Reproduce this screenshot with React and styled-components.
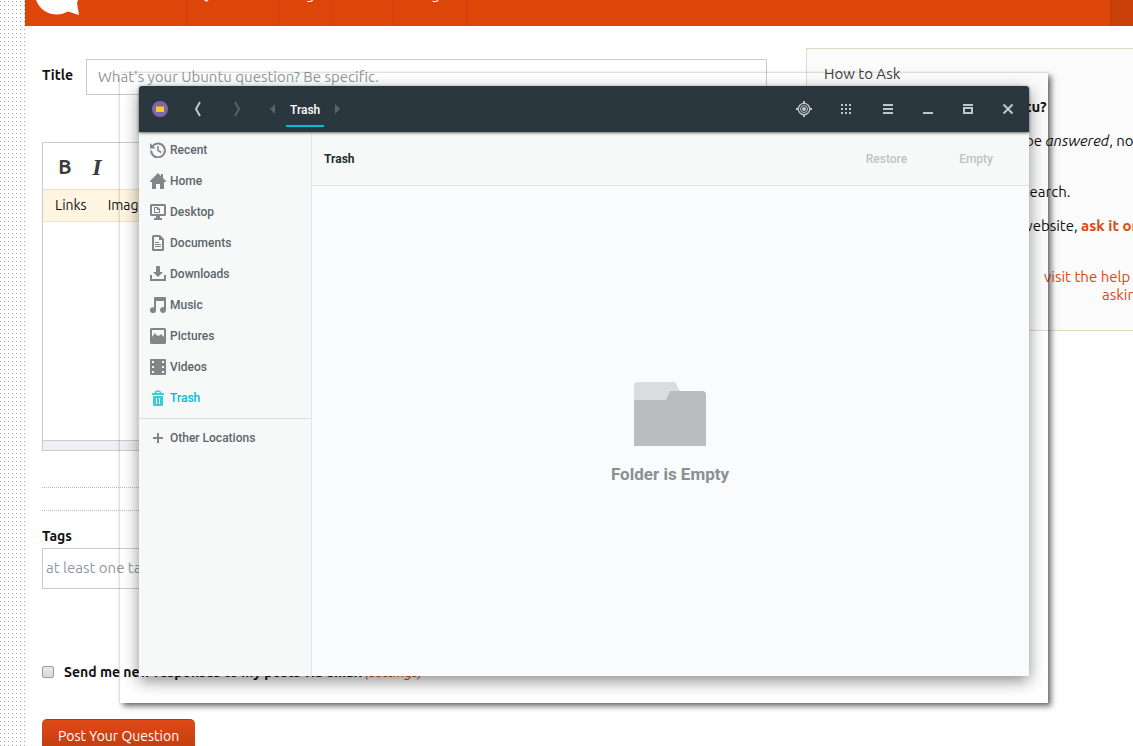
import React from "react";
import styled, { createGlobalStyle, css } from "styled-components";

const color = {
  orange: "#dd4509",
  orangeDark: "#c83f08",
  link: "#dd4814",
  bar: "#2b373e",
  accent: "#00bcd4",
  sidebarText: "#5c656a",
  icon: "#808689",
  border: "#c8ccd0",
  muted: "#9199a1",
};

const GlobalStyle = createGlobalStyle`
  * {
    box-sizing: border-box;
  }

  body {
    margin: 0;
    background: #ffffff;
    color: #111111;
    font-family: Ubuntu, "Noto Sans", "Open Sans", sans-serif;
    font-size: 14px;
    line-height: 18px;
    overflow: hidden;
  }

  button,
  input,
  textarea {
    font: inherit;
    margin: 0;
  }

  a {
    color: ${color.link};
    text-decoration: none;
  }
`;

/* Page behind the window */

const Page = styled.div`
  position: relative;
  height: 100vh;
  overflow: hidden;
  padding-left: 25px;
  background: linear-gradient(#ffffff 3px, transparent 3px) 0 2px / 4px 4px,
    linear-gradient(90deg, #a8a49f 1px, #ffffff 1px) 0 0 / 4px 4px;
`;

const Site = styled.div`
  display: flex;
  flex-direction: column;
  height: 100%;
  background: #ffffff;
`;

const TopBar = styled.header`
  display: flex;
  flex: none;
  height: 26px;
  overflow: hidden;
  background: ${color.orange};
`;

const Logo = styled.svg`
  display: block;
  flex: none;
  width: 161px;
  height: 26px;
`;

const Nav = styled.nav`
  display: flex;
  flex: 1;
`;

const NavItem = styled.a`
  flex: none;
  width: ${(props) => props.$width}px;
  height: 26px;
  border-left: 1px solid ${color.orangeDark};
  color: #ffffff;
  font-size: 15px;
  text-align: center;

  span {
    display: block;
    margin-top: -15px;
  }
`;

const TopEnd = styled.div`
  width: 23px;
  border-left: 1px solid #b93a07;
  background: ${color.orangeDark};
`;

const Columns = styled.main`
  display: flex;
  flex: 1;
  padding-left: 17px;
`;

const Form = styled.form`
  width: 725px;
  flex: none;
  padding-top: 33px;
`;

const TitleRow = styled.div`
  display: flex;
  align-items: flex-start;

  label {
    width: 44px;
    padding-top: 7px;
    font-weight: bold;
  }
`;

const TextField = styled.input`
  flex: 1;
  width: 100%;
  min-width: 0;
  height: ${(props) => props.$height}px;
  padding: 0 ${(props) => props.$pad}px 2px;
  border: 1px solid ${color.border};
  background: #ffffff;
  font-size: 15px;

  &::placeholder {
    color: ${color.muted};
    opacity: 1;
  }
`;

const Editor = styled.div`
  margin-top: 47px;
  border: 1px solid ${color.border};
`;

const Toolbar = styled.div`
  display: flex;
  gap: 4px;
  height: 46px;
  align-items: center;
  padding-left: 8px;
`;

const FormatButton = styled.button`
  width: 28px;
  padding: 2px 0 0;
  border: 0;
  background: none;
  color: #3b3b3b;
  font-size: 20px;
  line-height: 24px;
  font-weight: bold;
  ${(props) =>
    props.$italic &&
    css`
      font-family: "Liberation Serif", serif;
      font-style: italic;
      font-size: 24px;
    `}
`;

const HelpBar = styled.div`
  display: flex;
  gap: 21px;
  height: 33px;
  align-items: center;
  padding: 0 0 2px 12px;
  border: solid #f0e2c4;
  border-width: 1px 0;
  background: #fff5e1;

  a {
    color: #111111;
  }
`;

const Body = styled.textarea`
  display: block;
  width: 100%;
  height: 218px;
  border: 0;
  resize: none;
  background: #ffffff;
`;

const Grip = styled.div`
  height: 10px;
  border-top: 1px solid ${color.border};
  background: #eff0f1;
`;

const Preview = styled.div`
  height: 24px;
  margin: 36px 0 16px;
  border: dotted #b8b8b8;
  border-width: 1px 0;
`;

const Tags = styled.div`
  label {
    display: block;
    margin-bottom: 3px;
    font-weight: bold;
  }
`;

const SendRow = styled.div`
  display: flex;
  align-items: center;
  gap: 10px;
  margin-top: 74px;
  font-weight: bold;

  a {
    font-weight: normal;
    font-style: italic;
  }
`;

const Tick = styled.input`
  appearance: none;
  width: 12px;
  height: 12px;
  border: 1px solid #9c9c9c;
  border-radius: 2px;
  background: linear-gradient(#e9e9e9, #d8d8d8);
`;

const PostButton = styled.button`
  height: 34px;
  margin-top: 38px;
  padding: 0 16px 2px;
  border: 0;
  border-top: 1px solid #b93a07;
  border-radius: 5px;
  background: linear-gradient(#e04915, #bd3c0f);
  color: #ffffff;
`;

const HowTo = styled.aside`
  flex: none;
  width: 365px;
  height: 283px;
  margin: 22px 0 0 39px;
  padding: 16px 17px;
  border: 1px solid #e0dcbf;
  background: #fbfbfb;
  font-size: 15px;

  h2 {
    margin: 0 0 15px;
    color: #3b4045;
    font-size: 15px;
    line-height: 18px;
    font-weight: normal;
  }

  h2,
  p {
    white-space: nowrap;
  }
`;

const HowToLine = styled.p`
  margin: 0 0 ${(props) => props.$after ?? 16}px;
  padding-left: ${(props) => props.$indent}px;
`;

/* File manager window */

const Outline = styled.div`
  position: absolute;
  inset: 73px 85px 43px 120px;
  box-shadow: 3px 3px 6px rgba(0, 0, 0, 0.6), 0 0 2px rgba(0, 0, 0, 0.15);
`;

const Window = styled.section`
  position: absolute;
  inset: 86px 104px 70px 139px;
  display: flex;
  flex-direction: column;
  border-radius: 3px 3px 0 0;
  background: #fafbfd;
  box-shadow: 0 5px 16px rgba(0, 0, 0, 0.45);
  font-family: Roboto, sans-serif;
  font-size: 12px;
  line-height: 16px;
  font-weight: 500;
`;

const HeaderBar = styled.header`
  position: relative;
  z-index: 1;
  display: flex;
  flex: none;
  align-items: center;
  height: 46px;
  padding: 0 2px 0 13px;
  border-radius: 3px 3px 0 0;
  background: ${color.bar};
  box-shadow: 0 1px 3px rgba(0, 0, 0, 0.6);
  color: #c1c6c9;
`;

const BarButton = styled.button`
  display: flex;
  justify-content: center;
  align-items: center;
  width: ${(props) => props.$width}px;
  height: 24px;
  padding: 0;
  border: 0;
  background: none;
  color: ${(props) => (props.$dim ? "#59646a" : "inherit")};

  svg {
    display: block;
    flex: none;
  }
`;

const Crumbs = styled.div`
  display: flex;
  align-items: center;
  margin-left: 14px;
`;

const Crumb = styled.button`
  height: 46px;
  padding: 1px 4px 0;
  border: 0;
  background: linear-gradient(${color.accent}, ${color.accent}) 0 39px / 100% 2px
    no-repeat;
  color: #ffffff;
`;

const Spacer = styled.div`
  flex: 1;
`;

const WindowBody = styled.div`
  display: flex;
  flex: 1;
  min-height: 0;
`;

const Sidebar = styled.nav`
  flex: none;
  width: 173px;
  padding-top: 3px;
  border-right: 1px solid #e4e7e8;
  background: #f7f9f8;
`;

const Place = styled.a`
  display: flex;
  align-items: flex-start;
  gap: 4px;
  height: 31px;
  padding: 7px 0 0 11px;
  color: ${(props) => (props.$active ? color.accent : color.sidebarText)};

  svg {
    display: block;
    flex: none;
    color: ${(props) => (props.$active ? "#3ccbdc" : color.icon)};
  }
`;

const Divider = styled.hr`
  margin: 4px 0;
  border: 0;
  border-top: 1px solid #dadedf;
`;

const Content = styled.div`
  display: flex;
  flex: 1;
  flex-direction: column;
`;

const ActionBar = styled.div`
  display: flex;
  align-items: center;
  height: 54px;
  padding: 0 36px 0 12px;
  border-bottom: 1px solid #e3e6e7;
  background: #f7f9f8;

  h1 {
    flex: 1;
    margin: 0;
    color: #222d32;
    font-size: 12px;
    line-height: 16px;
    font-weight: bold;
  }
`;

const Action = styled.button`
  padding: 0;
  margin-left: 52px;
  border: 0;
  background: none;
  color: #bfc3c5;
`;

const Empty = styled.div`
  display: flex;
  flex: 1;
  flex-direction: column;
  align-items: center;
  justify-content: center;
  gap: 18px;
  padding: 4px 1px 0 0;
  color: #8a8f92;
  font-size: 17px;
  line-height: 20px;
  font-weight: bold;

  svg {
    display: block;
  }

  p {
    margin: 0;
  }
`;

const icons = {
  recent: (
    <>
      <path
        d="M2.600 4.200A6.900 6.900 0 1 1 1.100 8.600"
        fill="none"
        stroke="currentColor"
        strokeWidth="2"
      />
      <path d="M0 1v5.600h5.600z" />
      <path
        d="M8 4v4.300l3.200 2.200"
        fill="none"
        stroke="currentColor"
        strokeWidth="1.600"
      />
    </>
  ),
  home: <path d="M8 0 0 8v1h2v7h4v-5h4v5h4V9h2V8l-3-3V1h-2v2z" />,
  desktop: (
    <>
      <path
        fillRule="evenodd"
        d="M1.500 0h13A1.500 1.500 0 0 1 16 1.500v9a1.500 1.500 0 0 1-1.500 1.500H10v2h2v2H4v-2h2v-2H1.500A1.500 1.500 0 0 1 0 10.500v-9A1.500 1.500 0 0 1 1.500 0zM2 2v8h12V2z"
      />
      <path fillRule="evenodd" d="M4 3h4l2 2v4H4zm1 1v4h4V6H7V4z" />
    </>
  ),
  documents: (
    <path
      fillRule="evenodd"
      d="M3.500 0H10l4 4v10.500a1.500 1.500 0 0 1-1.500 1.500h-9A1.500 1.500 0 0 1 2 14.500v-13A1.500 1.500 0 0 1 3.500 0zM4 2v12h8V5H9V2zM5 7h4v1H5zm0 2h6v1H5zm0 2h6v1H5z"
    />
  ),
  downloads: (
    <path d="M7 0h2a1 1 0 0 1 1 1v5h3l-5 5-5-5h3V1a1 1 0 0 1 1-1zM0 9h2v4h12V9h2v6H0z" />
  ),
  music: (
    <path d="M5 0h10a1 1 0 0 1 1 1v12a3 3 0 1 1-2-2.800V4H6v9.200a3 3 0 1 1-2-2.800V1a1 1 0 0 1 1-1z" />
  ),
  pictures: (
    <path
      fillRule="evenodd"
      d="M1.500 0h13A1.500 1.500 0 0 1 16 1.500v13a1.500 1.500 0 0 1-1.500 1.500h-13A1.500 1.500 0 0 1 0 14.500v-13A1.500 1.500 0 0 1 1.500 0zM2 2v7l3-4 2 3 1-1 1 1 2-2 3 3V2z"
    />
  ),
  videos: (
    <path
      fillRule="evenodd"
      d="M1 0h14a1 1 0 0 1 1 1v14a1 1 0 0 1-1 1H1a1 1 0 0 1-1-1V1a1 1 0 0 1 1-1zM2 2v2h2V2zm0 5v2h2V7zm0 5v2h2v-2zM12 2v2h2V2zm0 5v2h2V7zm0 5v2h2v-2z"
    />
  ),
  trash: (
    <>
      <path
        d="M5.500 3a2.500 2 0 0 1 5 0"
        fill="none"
        stroke="currentColor"
        strokeWidth="1.600"
      />
      <path d="M3 3h10a1 1 0 0 1 1 1v1H2V4a1 1 0 0 1 1-1z" />
      <path
        fillRule="evenodd"
        d="M3 6h10v9a1 1 0 0 1-1 1H4a1 1 0 0 1-1-1zM6 8v6h1V8zm3 0v6h1V8z"
      />
    </>
  ),
  other: <path d="M7 3h2v4h4v2H9v4H7V9H3V7h4z" />,
  back: (
    <path d="M10 1 6 8l4 7" fill="none" stroke="currentColor" strokeWidth="2" />
  ),
  forward: (
    <path d="m6 1 4 7-4 7" fill="none" stroke="currentColor" strokeWidth="2" />
  ),
  left: <path d="M10 3v10L5 8z" />,
  right: <path d="M6 3v10l5-5z" />,
  locate: (
    <>
      <path d="M7 0h2v3H7zm0 13h2v3H7zM0 7h3v2H0zm13 0h3v2h-3z" />
      <circle
        cx="8"
        cy="8"
        r="5.700"
        fill="none"
        stroke="currentColor"
        strokeWidth="1.300"
      />
      <circle
        cx="8"
        cy="8"
        r="3.500"
        fill="none"
        stroke="currentColor"
        strokeWidth="1"
      />
      <circle cx="8" cy="8" r="2" />
    </>
  ),
  grid: (
    <path d="M3 3h2v2H3zm4 0h2v2H7zm4 0h2v2h-2zM3 7h2v2H3zm4 0h2v2H7zm4 0h2v2h-2zM3 11h2v2H3zm4 0h2v2H7zm4 0h2v2h-2z" />
  ),
  menu: <path d="M3 3h10v2H3zm0 4h10v2H3zm0 4h10v2H3z" />,
  minimize: <path d="M3 11h10v2H3z" />,
  maximize: (
    <path fillRule="evenodd" d="M3 3h10v2H3zm0 3h10v7H3zm2 2v3h6V8z" />
  ),
  close: (
    <path
      d="m3.500 3.500 9 9m0-9-9 9"
      fill="none"
      stroke="currentColor"
      strokeWidth="2"
    />
  ),
};

const Icon = ({ name }) => (
  <svg
    width="16"
    height="16"
    viewBox="0 0 16 16"
    fill="currentColor"
    aria-hidden="true"
  >
    {icons[name]}
  </svg>
);

const navItems = [
  { label: "Questions", width: 92 },
  { label: "Tags", width: 54 },
  { label: "Users", width: 61 },
  { label: "Badges", width: 73 },
  { label: "", width: 1 },
];

const places = [
  { icon: "recent", label: "Recent" },
  { icon: "home", label: "Home" },
  { icon: "desktop", label: "Desktop" },
  { icon: "documents", label: "Documents" },
  { icon: "downloads", label: "Downloads" },
  { icon: "music", label: "Music" },
  { icon: "pictures", label: "Pictures" },
  { icon: "videos", label: "Videos" },
  { icon: "trash", label: "Trash" },
];

const tools = [
  { icon: "locate", label: "Locate", width: 42 },
  { icon: "grid", label: "View", width: 42 },
  { icon: "menu", label: "Menu", width: 42 },
  { icon: "minimize", label: "Minimize", width: 38 },
  { icon: "maximize", label: "Maximize", width: 42 },
  { icon: "close", label: "Close", width: 38 },
];

const AskPage = () => (
  <Site>
    <TopBar>
      <Logo viewBox="0 0 161 26" aria-hidden="true">
        <path
          d="M11 0C15 10 23 14.500 32 14.500q6 0 11-3l11 3.500-2-12 1-3z"
          fill="#ffffff"
        />
      </Logo>
      <Nav>
        {navItems.map((item) => (
          <NavItem key={item.width} href="#" $width={item.width}>
            <span>{item.label}</span>
          </NavItem>
        ))}
      </Nav>
      <TopEnd />
    </TopBar>
    <Columns>
      <Form>
        <TitleRow>
          <label htmlFor="title">Title</label>
          <TextField
            id="title"
            placeholder="What's your Ubuntu question? Be specific."
            $height={36}
            $pad={11}
          />
        </TitleRow>
        <Editor>
          <Toolbar>
            <FormatButton type="button">B</FormatButton>
            <FormatButton type="button" $italic>
              I
            </FormatButton>
          </Toolbar>
          <HelpBar>
            <a href="#">Links</a>
            <a href="#">Images</a>
          </HelpBar>
          <Body aria-label="Question body" />
          <Grip />
        </Editor>
        <Preview />
        <Tags>
          <label htmlFor="tags">Tags</label>
          <TextField
            id="tags"
            placeholder="at least one tag"
            $height={41}
            $pad={3}
          />
        </Tags>
        <SendRow>
          <Tick type="checkbox" id="notify" />
          <label htmlFor="notify">
            Send me new responses to my posts via email{" "}
            <a href="#">(settings)</a>
          </label>
        </SendRow>
        <PostButton type="button">Post Your Question</PostButton>
      </Form>
      <HowTo>
        <h2>How to Ask</h2>
        <HowToLine $indent={164}>
          <b>Ubuntu?</b>
        </HowToLine>
        <HowToLine $indent={201} $after={33}>
          be <i>answered</i>, not
        </HowToLine>
        <HowToLine $indent={199}>search.</HowToLine>
        <HowToLine $indent={197} $after={33}>
          website,{" "}
          <a href="#">
            <b>ask it on</b>
          </a>
        </HowToLine>
        <HowToLine $indent={220} $after={0}>
          <a href="#">visit the help</a>
        </HowToLine>
        <HowToLine $indent={278}>
          <a href="#">asking</a>
        </HowToLine>
      </HowTo>
    </Columns>
  </Site>
);

const FileManager = () => (
  <Window>
    <HeaderBar>
      <svg width="16" height="16" viewBox="0 0 16 16" aria-hidden="true">
        <circle cx="8" cy="8" r="8" fill="#7a68a8" />
        <path d="M4 5h8v1H4z" fill="#ee8f1c" />
        <path d="M4 6h8v5H4z" fill="#ffca28" />
      </svg>
      <BarButton type="button" aria-label="Back" $width={60}>
        <Icon name="back" />
      </BarButton>
      <BarButton type="button" aria-label="Forward" $width={18} $dim>
        <Icon name="forward" />
      </BarButton>
      <Crumbs>
        <BarButton type="button" aria-label="Previous" $width={26} $dim>
          <Icon name="left" />
        </BarButton>
        <Crumb type="button">Trash</Crumb>
        <BarButton type="button" aria-label="Next" $width={26} $dim>
          <Icon name="right" />
        </BarButton>
      </Crumbs>
      <Spacer />
      {tools.map((tool) => (
        <BarButton
          key={tool.icon}
          type="button"
          aria-label={tool.label}
          $width={tool.width}
        >
          <Icon name={tool.icon} />
        </BarButton>
      ))}
    </HeaderBar>
    <WindowBody>
      <Sidebar>
        {places.map((place) => (
          <Place key={place.icon} href="#" $active={place.icon === "trash"}>
            <Icon name={place.icon} />
            {place.label}
          </Place>
        ))}
        <Divider />
        <Place href="#">
          <Icon name="other" />
          Other Locations
        </Place>
      </Sidebar>
      <Content>
        <ActionBar>
          <h1>Trash</h1>
          <Action type="button">Restore</Action>
          <Action type="button">Empty</Action>
        </ActionBar>
        <Empty>
          <svg width="72" height="64" viewBox="0 0 72 64" aria-hidden="true">
            <path d="M4 0h37l5 9v10H0V4a4 4 0 0 1 4-4z" fill="#dadddf" />
            <path d="M36 9h32a4 4 0 0 1 4 4v51H0V18h32z" fill="#b9bdc0" />
          </svg>
          <p>Folder is Empty</p>
        </Empty>
      </Content>
    </WindowBody>
  </Window>
);

const App = () => (
  <>
    <GlobalStyle />
    <Page>
      <AskPage />
      <Outline />
      <FileManager />
    </Page>
  </>
);

export default App;
